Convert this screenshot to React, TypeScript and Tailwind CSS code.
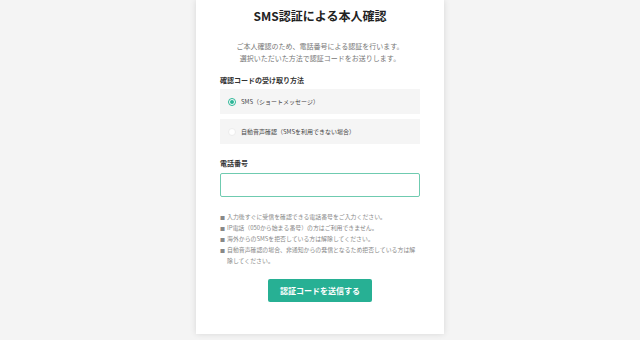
export default function App() {
  const notes = [
    "入力後すぐに受信を確認できる電話番号をご入力ください。",
    "IP電話（050から始まる番号）の方はご利用できません。",
    "海外からのSMSを拒否している方は解除してください。",
    "自動音声確認の場合、非通知からの発信となるため拒否している方は解除してください。",
  ];

  return (
    <div
      className="flex h-[340px] w-full justify-center bg-[#f4f4f4]"
      style={{ fontFamily: '"Noto Sans CJK JP", "Noto Sans", sans-serif' }}
    >
      <div className="mb-[6px] flex w-[248px] flex-col bg-white px-6 pt-[7px] shadow-[0_0_6px_rgba(0,0,0,0.12)]">
        <h1 className="text-center text-[12px] font-bold leading-[18px] text-[#222]">
          SMS認証による本人確認
        </h1>

        <p className="mt-[15px] text-center text-[7px] leading-[12px] text-[#777]">
          ご本人確認のため、電話番号による認証を行います。
          <br />
          選択いただいた方法で認証コードをお送りします。
        </p>

        <div className="mt-[10px] text-[7px] font-bold leading-[12px] text-[#333]">
          確認コードの受け取り方法
        </div>

        <div className="mt-[3px] flex h-[25px] items-center gap-[5px] bg-[#f5f5f5] px-[8px]">
          <span className="flex h-[8px] w-[8px] items-center justify-center rounded-full border border-[#2bb596] bg-white">
            <span className="h-[4px] w-[4px] rounded-full bg-[#2bb596]" />
          </span>
          <span className="text-[6px] leading-none text-[#444]">SMS（ショートメッセージ）</span>
        </div>

        <div className="mt-[5px] flex h-[25px] items-center gap-[5px] bg-[#f5f5f5] px-[8px]">
          <span className="h-[8px] w-[8px] rounded-full border border-[#ececec] bg-white" />
          <span className="text-[6px] leading-none text-[#444]">自動音声確認（SMSを利用できない場合）</span>
        </div>

        <div className="mt-[13px] text-[7px] font-bold leading-[12px] text-[#333]">電話番号</div>

        <div className="mt-[4px] h-[24px] rounded-[2px] border border-[#6fcbb0] bg-white" />

        <ul className="mt-[14px] flex flex-col text-[5.9px] leading-[11px] text-[#888]">
          {notes.map((n) => (
            <li key={n} className="flex">
              <span className="mr-[2px] shrink-0 text-[5px]">■</span>
              <span className="break-all">{n}</span>
            </li>
          ))}
        </ul>

        <div className="mt-[13px] flex justify-center">
          <button className="h-[23px] w-[104px] rounded-[2px] bg-[#27b094] text-[8px] font-bold text-white">
            認証コードを送信する
          </button>
        </div>
      </div>
    </div>
  );
}
